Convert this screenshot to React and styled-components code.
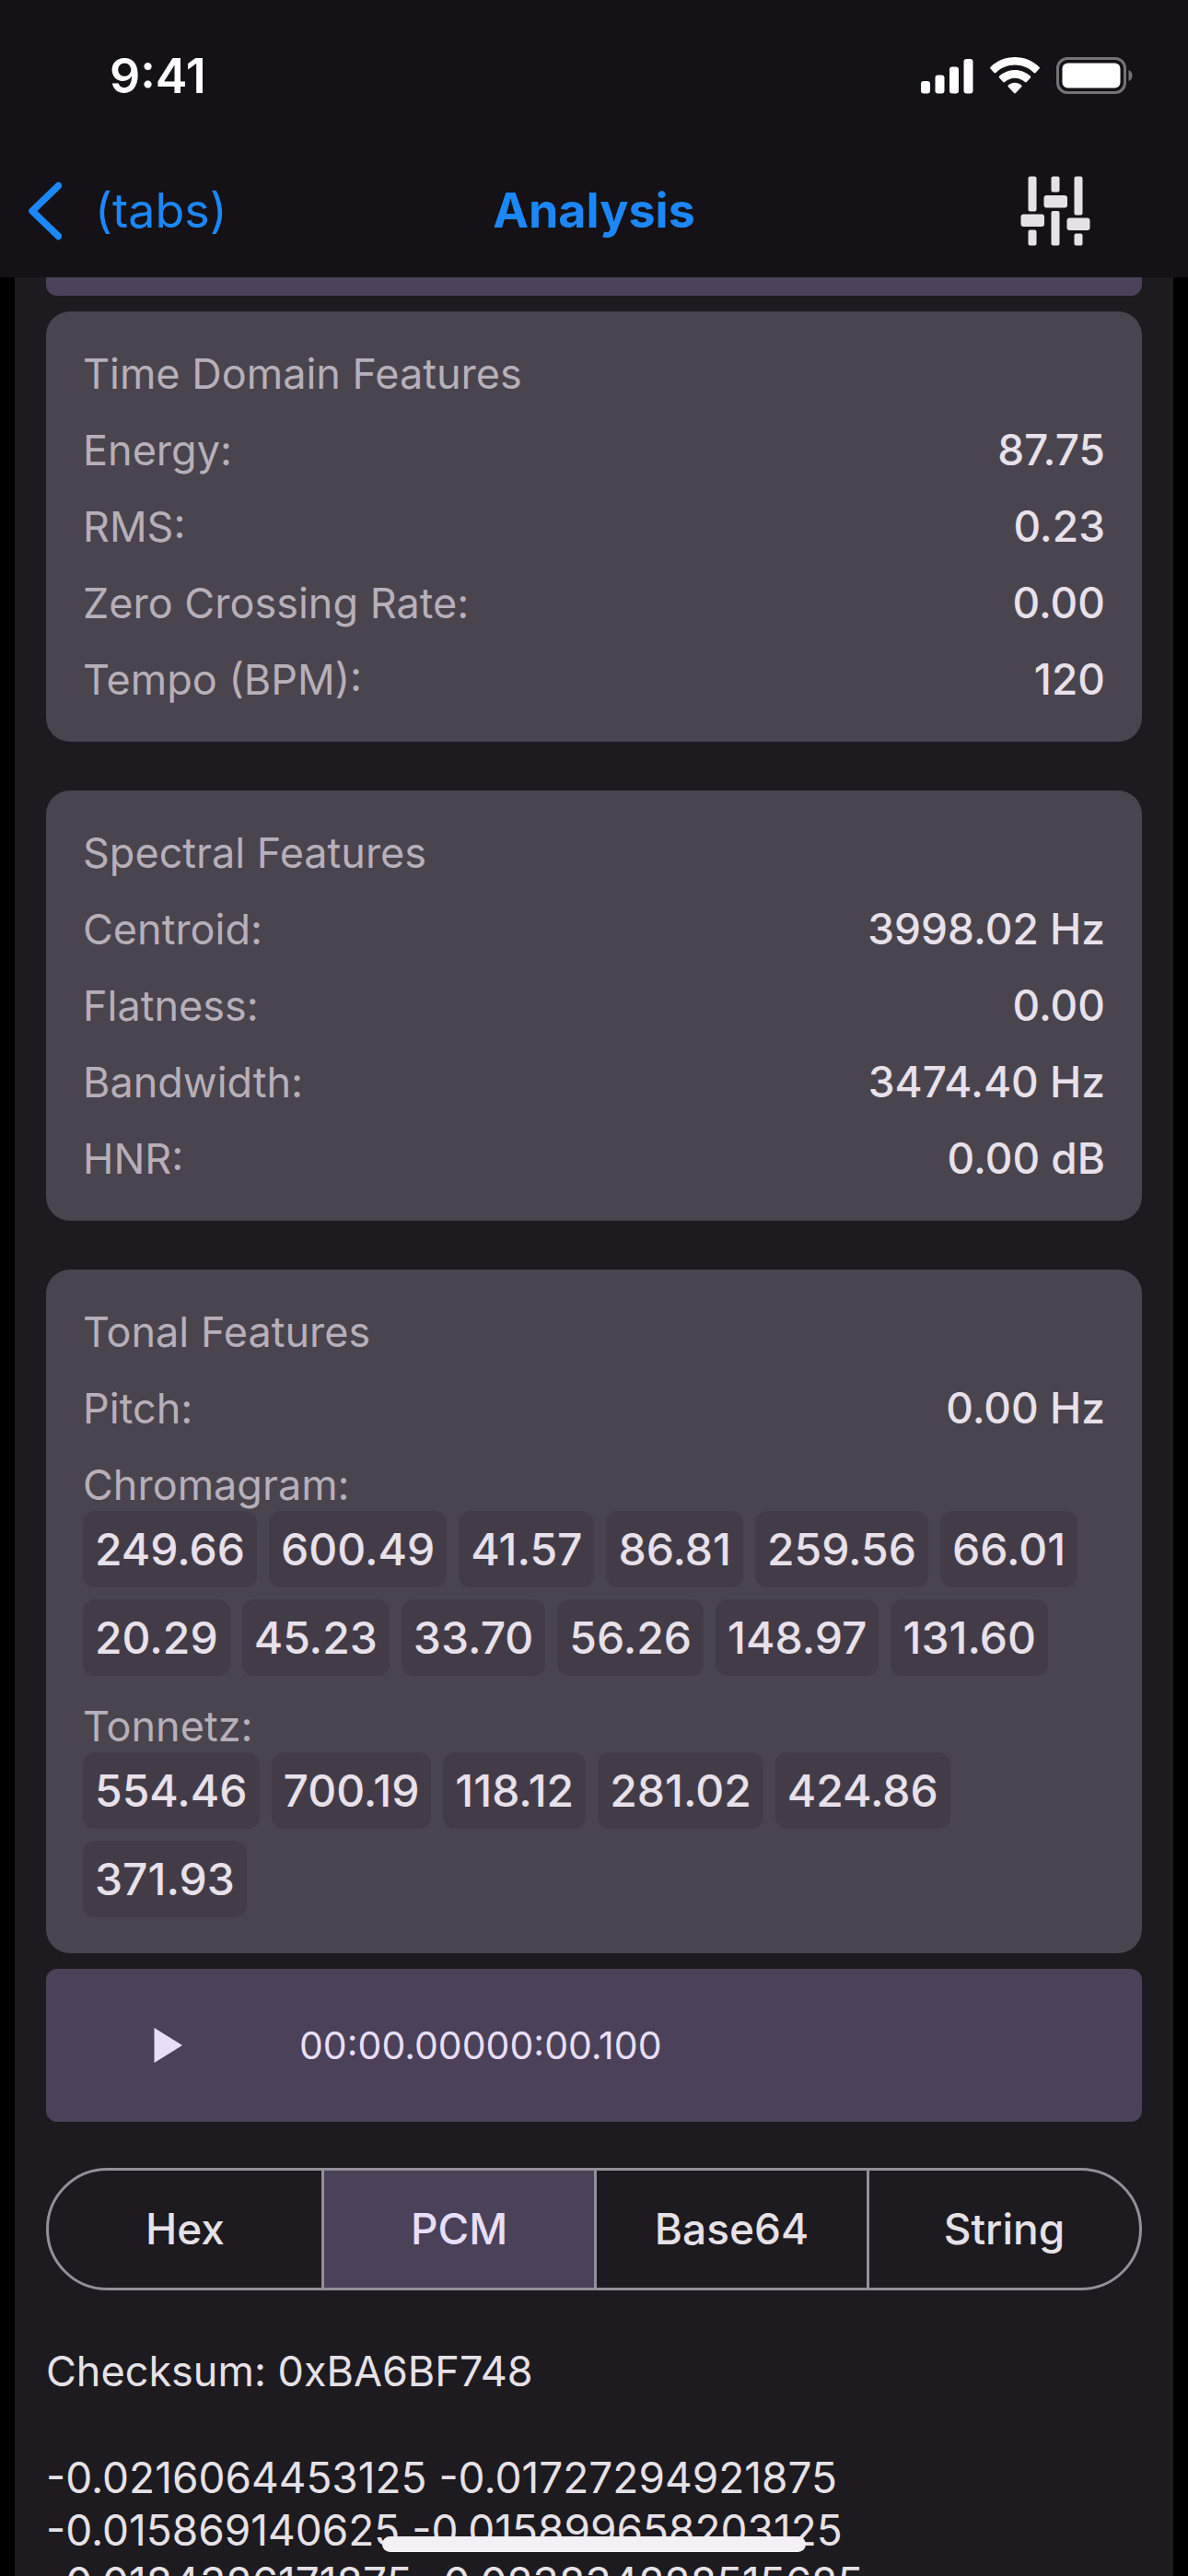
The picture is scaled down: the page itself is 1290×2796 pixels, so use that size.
import React, { useState } from "react";
import styled, { createGlobalStyle } from "styled-components";

const color = {
  header: "#141216",
  surface: "#1d1a20",
  card: "#4a444f",
  chip: "#433c48",
  accent: "#4b4158",
  outline: "#948f99",
  text: "#e6e1e6",
  value: "#e8e0ea",
  label: "#b7afb9",
  onAccent: "#e8def8",
  link: "#1c87f8",
};

const GlobalStyle = createGlobalStyle`
  *, *::before, *::after { box-sizing: border-box; }
  html, body { margin: 0; background: #000; }
  body {
    font-family: Inter, "Liberation Sans", sans-serif;
    font-size: 45px;
    line-height: 57px;
    color: ${color.text};
  }
  button {
    font: inherit;
    color: inherit;
    background: none;
    border: 0;
    padding: 0;
    cursor: pointer;
  }
  svg { display: block; }
`;

const Screen = styled.div`
  height: 100vh;
  display: flex;
  flex-direction: column;
  overflow: hidden;
  background: #000;
`;

const Header = styled.header`
  flex: none;
  background: ${color.header};
`;

const StatusBar = styled.div`
  height: 156px;
  padding: 8px 59px 0 119px;
  display: flex;
  align-items: center;
  justify-content: space-between;
  color: #fff;
  font-size: 52px;
  font-weight: 600;
`;

const StatusIcons = styled.div`
  display: flex;
  align-items: center;
  gap: 18px;
`;

const NavBar = styled.nav`
  height: 145px;
  padding: 0 106px 0 28px;
  display: grid;
  grid-template-columns: 1fr auto 1fr;
  align-items: center;
  font-size: 52px;
`;

const BackLink = styled.a`
  display: flex;
  align-items: center;
  gap: 36px;
  color: ${color.link};
  text-decoration: none;
`;

const Title = styled.h1`
  margin: 0;
  padding-left: 78px;
  font: inherit;
  font-weight: 700;
  color: ${color.link};
`;

const IconButton = styled.button`
  justify-self: end;
`;

const Content = styled.main`
  flex: 1;
  min-height: 0;
  margin: 0 16px;
  padding: 0 34px;
  overflow: hidden;
  background: ${color.surface};
`;

const PanelEdge = styled.div`
  height: 20px;
  margin-bottom: 17px;
  border-radius: 0 0 12px 12px;
  background: ${color.accent};
`;

const Cards = styled.div`
  display: flex;
  flex-direction: column;
  gap: 53px;
`;

const Card = styled.section`
  display: flex;
  flex-direction: column;
  gap: 26px;
  padding: 39px 40px;
  border-radius: 26px;
  background: ${color.card};
  color: ${color.label};
`;

const CardTitle = styled.h2`
  margin: 0;
  font: inherit;
`;

const Row = styled.div`
  display: flex;
  justify-content: space-between;
`;

const Value = styled.span`
  font-size: 46px;
  font-weight: 500;
  color: ${color.value};
`;

const ChipList = styled.ul`
  display: flex;
  flex-wrap: wrap;
  gap: 13px;
  margin: 0;
  padding: 0;
  list-style: none;
`;

const Chip = styled.li`
  padding: 13px;
  border-radius: 13px;
  background: ${color.chip};
  color: ${color.value};
  font-size: 48px;
  font-weight: 500;
`;

const Player = styled.div`
  height: 166px;
  margin-top: 17px;
  padding: 0 116px;
  display: flex;
  align-items: center;
  gap: 126px;
  border-radius: 12px;
  background: ${color.accent};
  color: ${color.onAccent};
  font-size: 41px;
`;

const Segments = styled.div`
  display: grid;
  grid-template-columns: repeat(4, 1fr);
  height: 133px;
  margin-top: 50px;
  border: 3px solid ${color.outline};
  border-radius: 67px;
  overflow: hidden;
`;

const Segment = styled.button`
  && {
    font-weight: 500;
    font-size: 46px;
    color: ${(p) => (p.$on ? color.onAccent : color.text)};
    background: ${(p) => (p.$on ? color.accent : "transparent")};
  }
  & + & {
    border-left: 3px solid ${color.outline};
  }
`;

const Paragraph = styled.p`
  margin: 59px 0 0;
  font-size: ${(p) => (p.$data ? "46px" : "45px")};
`;

const HomeIndicator = styled.div`
  position: fixed;
  left: 50%;
  bottom: 26px;
  width: 460px;
  height: 17px;
  margin-left: -230px;
  border-radius: 9px;
  background: #f3f1f5;
`;

const SignalIcon = () => (
  <svg width="57" height="40" viewBox="0 0 57 40" fill="#fff" aria-hidden="true">
    <rect x="0" y="26" width="10" height="13.5" rx="3" />
    <rect x="15.5" y="19.5" width="10" height="20" rx="3" />
    <rect x="31" y="10.5" width="10" height="29" rx="3" />
    <rect x="46.5" y="2" width="10" height="37.5" rx="3" />
  </svg>
);

const WifiIcon = () => (
  <svg width="54" height="40" viewBox="0 0 54 40" fill="#fff" aria-hidden="true">
    <path d="M27 0C16.900 0 7.500 3.900.500 10.700c-.600.600-.600 1.300 0 1.900l4 4.300c.500.600 1.300.600 1.900 0C12 11.600 19.200 8.600 27 8.600s15 3 20.600 8.300c.600.600 1.400.600 1.900 0l4-4.300c.600-.600.600-1.300 0-1.900C46.500 3.900 37.100 0 27 0z" />
    <path d="M27 14c-6.300 0-12.200 2.400-16.800 6.600-.600.600-.600 1.300-.100 1.900l4.200 4.500c.500.500 1.200.500 1.800 0 3-2.700 6.800-4.300 10.900-4.300s7.900 1.600 10.900 4.300c.600.500 1.300.500 1.800 0l4.200-4.500c.500-.600.500-1.300-.100-1.900C39.200 16.400 33.300 14 27 14z" />
    <path d="M27 27.800c-2.700 0-5.200 1-7.100 2.700-.600.500-.600 1.300-.100 1.800l6.300 6.700c.500.600 1.300.600 1.800 0l6.300-6.700c.500-.500.500-1.300-.100-1.800-1.900-1.700-4.400-2.700-7.100-2.700z" />
  </svg>
);

const BatteryIcon = () => (
  <svg width="84" height="40" viewBox="0 0 84 40" aria-hidden="true">
    <rect x="1.500" y="1.500" width="73" height="37" rx="10.500" fill="none" stroke="#757377" strokeWidth="3" />
    <rect x="6.500" y="6.500" width="63" height="27" rx="6" fill="#fff" />
    <path d="M78.500 14c2.600 1 4 3.300 4 6s-1.400 5-4 6z" fill="#757377" />
  </svg>
);

const BackIcon = () => (
  <svg width="39" height="64" viewBox="0 0 39 64" fill="none" aria-hidden="true">
    <path d="M35.500 4.500L7 32l28.500 27.500" stroke={color.link} strokeWidth="7.500" strokeLinecap="round" strokeLinejoin="round" />
  </svg>
);

const SlidersIcon = () => (
  <svg width="76" height="76" viewBox="0 0 76 76" fill="#e6e1e6" aria-hidden="true">
    <rect x="8.500" y="0.500" width="9" height="38" rx="2" />
    <rect x="0.500" y="41.500" width="25.500" height="13.500" rx="3" />
    <rect x="8.500" y="58.500" width="9" height="17" rx="2" />
    <rect x="33.500" y="0.500" width="9" height="17" rx="2" />
    <rect x="25.500" y="21" width="25.500" height="13.500" rx="3" />
    <rect x="33.500" y="38" width="9" height="37.500" rx="2" />
    <rect x="58.500" y="0.500" width="9" height="42" rx="2" />
    <rect x="50.500" y="45.500" width="25" height="13.500" rx="3" />
    <rect x="58.500" y="62.500" width="9" height="13" rx="2" />
  </svg>
);

const PlayIcon = () => (
  <svg width="33" height="40" viewBox="0 0 33 40" fill={color.onAccent} aria-hidden="true">
    <path d="M1.500 1v38L32 20z" />
  </svg>
);

const timeRows = [
  ["Energy:", "87.75"],
  ["RMS:", "0.23"],
  ["Zero Crossing Rate:", "0.00"],
  ["Tempo (BPM):", "120"],
];

const spectralRows = [
  ["Centroid:", "3998.02 Hz"],
  ["Flatness:", "0.00"],
  ["Bandwidth:", "3474.40 Hz"],
  ["HNR:", "0.00 dB"],
];

const chromagram = [
  "249.66", "600.49", "41.57", "86.81", "259.56", "66.01",
  "20.29", "45.23", "33.70", "56.26", "148.97", "131.60",
];

const tonnetz = ["554.46", "700.19", "118.12", "281.02", "424.86", "371.93"];

const formats = ["Hex", "PCM", "Base64", "String"];

const samples = [
  "-0.0216064453125 -0.01727294921875",
  "-0.015869140625 -0.015899658203125",
  "-0.0184326171875 -0.023834228515625",
];

const Rows = ({ items }) =>
  items.map(([name, value]) => (
    <Row key={name}>
      <span>{name}</span>
      <Value>{value}</Value>
    </Row>
  ));

const Chips = ({ name, items }) => (
  <div>
    <div>{name}</div>
    <ChipList>
      {items.map((item) => (
        <Chip key={item}>{item}</Chip>
      ))}
    </ChipList>
  </div>
);

export default function App() {
  const [format, setFormat] = useState("PCM");

  return (
    <Screen>
      <GlobalStyle />
      <Header>
        <StatusBar>
          <span>9:41</span>
          <StatusIcons>
            <SignalIcon />
            <WifiIcon />
            <BatteryIcon />
          </StatusIcons>
        </StatusBar>
        <NavBar>
          <BackLink href="#tabs">
            <BackIcon />
            <span>(tabs)</span>
          </BackLink>
          <Title>Analysis</Title>
          <IconButton type="button" aria-label="Settings">
            <SlidersIcon />
          </IconButton>
        </NavBar>
      </Header>
      <Content>
        <PanelEdge />
        <Cards>
          <Card>
            <CardTitle>Time Domain Features</CardTitle>
            <Rows items={timeRows} />
          </Card>
          <Card>
            <CardTitle>Spectral Features</CardTitle>
            <Rows items={spectralRows} />
          </Card>
          <Card>
            <CardTitle>Tonal Features</CardTitle>
            <Rows items={[["Pitch:", "0.00 Hz"]]} />
            <Chips name="Chromagram:" items={chromagram} />
            <Chips name="Tonnetz:" items={tonnetz} />
          </Card>
        </Cards>
        <Player>
          <button type="button" aria-label="Play">
            <PlayIcon />
          </button>
          <div>
            <span>00:00.000</span>
            <span>00:00.100</span>
          </div>
        </Player>
        <Segments role="group" aria-label="Data format">
          {formats.map((name) => (
            <Segment
              key={name}
              type="button"
              $on={name === format}
              aria-pressed={name === format}
              onClick={() => setFormat(name)}
            >
              {name}
            </Segment>
          ))}
        </Segments>
        <Paragraph>Checksum: 0xBA6BF748</Paragraph>
        <Paragraph $data>
          {samples.map((line) => (
            <React.Fragment key={line}>
              {line}
              <br />
            </React.Fragment>
          ))}
        </Paragraph>
      </Content>
      <HomeIndicator />
    </Screen>
  );
}
